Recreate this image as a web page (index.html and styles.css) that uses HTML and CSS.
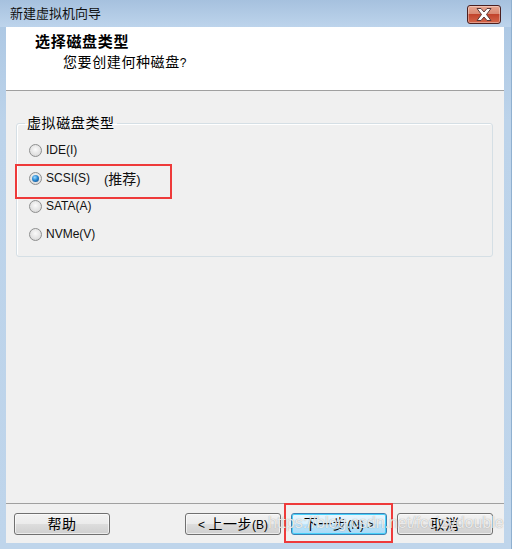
FILE: index.html
```html
<!DOCTYPE html>
<html lang="zh-CN">
<head>
<meta charset="utf-8">
<title>新建虚拟机向导</title>
<link rel="stylesheet" href="styles.css">
</head>
<body>
<div class="window">
  <div class="titlebar">
    <span class="title">新建虚拟机向导</span>
    <button class="close" aria-label="关闭">
      <svg width="22" height="15" viewBox="0 0 22 15">
        <path d="M4 1.5 L8 1.5 L11 5 L14 1.5 L18 1.5 L13.5 7.5 L18 13.5 L14 13.5 L11 10 L8 13.5 L4 13.5 L8.5 7.5 Z" fill="#fff" stroke="#5a3a3a" stroke-width="1" stroke-linejoin="round"/>
      </svg>
    </button>
  </div>
  <div class="client">
    <div class="header">
      <div class="heading">选择磁盘类型</div>
      <div class="subheading">您要创建何种磁盘<span class="q">?</span></div>
    </div>
    <div class="content">
      <fieldset class="group">
        <legend class="legend">虚拟磁盘类型</legend>
        <label class="option"><input type="radio" name="disk" class="radio"><span>IDE(I)</span></label>
        <label class="option"><input type="radio" name="disk" class="radio" checked><span>SCSI(S)</span><span class="rec">(<span class="zh">推荐</span>)</span></label>
        <label class="option"><input type="radio" name="disk" class="radio"><span>SATA(A)</span></label>
        <label class="option"><input type="radio" name="disk" class="radio"><span>NVMe(V)</span></label>
      </fieldset>
    </div>
    <div class="footer">
      <button class="btn"><span class="zh">帮助</span></button>
      <div class="spacer"></div>
      <button class="btn">&lt; <span class="zh">上一步</span>(B)</button>
      <button class="btn btn-default"><span class="zh">下一步</span>(N) &gt;</button>
      <button class="btn"><span class="zh">取消</span></button>
    </div>
  </div>
  <div class="mark mark-radio"></div>
  <div class="mark mark-next"></div>
  <div class="watermark">https://blog.csdn.net/fccizydouble</div>
</div>
</body>
</html>
```
FILE: styles.css
```css
* { box-sizing: border-box; }
html, body { margin: 0; padding: 0; }
body {
  width: 512px;
  height: 549px;
  overflow: hidden;
  font-family: "Liberation Sans", "Noto Sans CJK SC", sans-serif;
  font-size: 12px;
  color: #000;
}
.window {
  position: relative;
  width: 512px;
  height: 549px;
  background: linear-gradient(to bottom, #a9c5e2 0px, #bcd3ea 120px, #bfd5eb 549px);
  display: flex;
  flex-direction: column;
  border-right: 1px solid #8fb0d0;
}
.titlebar {
  height: 27px;
  display: flex;
  align-items: flex-start;
  padding-left: 10px;
  background: linear-gradient(to bottom, #a6c1de, #bdd4ec);
}
.title {
  margin-top: 5px;
  line-height: 18px;
  font-size: 13px;
  color: #111;
  flex: 1;
}
.close {
  margin: 5px 10px 0 0;
  width: 34px;
  height: 19px;
  padding: 0;
  border: 1px solid #4b2020;
  border-radius: 3px;
  background: linear-gradient(to bottom, #e8a690 0%, #d98a74 45%, #c2442c 50%, #d4664a 100%);
  box-shadow: inset 0 0 0 1px rgba(255,255,255,0.35);
  display: flex;
  align-items: center;
  justify-content: center;
}
.client {
  margin: 0 7px 0 6px;
  display: flex;
  flex-direction: column;
}
.header {
  height: 64px;
  background: #fff;
  border-bottom: 1px solid #a0a0a0;
  padding: 6px 0 0 29px;
}
.heading {
  font-weight: bold;
  font-size: 15px;
  letter-spacing: 0.7px;
  line-height: 18px;
}
.subheading {
  margin-top: 2px;
  padding-left: 28px;
  font-size: 14px;
  letter-spacing: 0.6px;
  line-height: 18px;
}
.q { font-size: 12px; }
.zh { font-size: 14px; }
.content {
  height: 412px;
  background: #f0f0f0;
  padding: 23px 11px 0 10px;
}
.group {
  margin: 0;
  padding: 4px 0 8px 12px;
  border: 1px solid #d5dfe5;
  border-radius: 3px;
  box-shadow: inset 1px 1px 0 #fff;
}
.legend {
  margin-left: -4px;
  padding: 0 2px;
  line-height: 18px;
  font-size: 14px;
  letter-spacing: 0.6px;
}
.option {
  display: flex;
  align-items: center;
  height: 28px;
  gap: 4px;
  color: #111;
}
.radio {
  -webkit-appearance: none;
  appearance: none;
  margin: 0;
  width: 13px;
  height: 13px;
  border-radius: 50%;
  border: 1px solid #8e8f8f;
  background: radial-gradient(circle at 50% 40%, #fafafa 0%, #e2e2e2 60%, #cfcfcf 100%);
  position: relative;
}
.radio:checked::after {
  content: "";
  position: absolute;
  left: 2px;
  top: 2px;
  width: 7px;
  height: 7px;
  border-radius: 50%;
  background: radial-gradient(circle at 40% 35%, #9fdcff 0%, #2a8ad4 45%, #0c3e78 100%);
}
.rec {
  margin-left: 10px;
  font-size: 13px;
}
.footer {
  height: 40px;
  border-top: 1px solid #a0a0a0;
  background: #f0f0f0;
  display: flex;
  align-items: flex-start;
  padding: 9px 11px 0 8px;
  gap: 10px;
}
.spacer { flex: 1; }
.btn {
  width: 96px;
  height: 22px;
  padding: 0;
  border: 1px solid #707070;
  border-radius: 3px;
  background: linear-gradient(to bottom, #f2f2f2 0%, #ebebeb 50%, #dddddd 51%, #cfcfcf 100%);
  box-shadow: inset 0 0 0 1px rgba(255,255,255,0.6);
  font-family: "Liberation Sans", "Noto Sans CJK SC", sans-serif;
  font-size: 12px;
  line-height: 18px;
  color: #000;
  white-space: nowrap;
}
.btn .zh { letter-spacing: 0.5px; }
.btn-default {
  border-color: #3c7fb1;
  background: linear-gradient(to bottom, #eaf6fd 0%, #d9f0fc 50%, #bee6fd 51%, #a7d9f5 100%);
  box-shadow: inset 0 0 0 1px #48d1fb;
}
.mark {
  position: absolute;
  border: 2px solid #ee3a3a;
}
.mark-radio {
  left: 15px;
  top: 164px;
  width: 157px;
  height: 35px;
}
.mark-next {
  left: 284px;
  top: 503px;
  width: 109px;
  height: 40px;
}
.watermark {
  position: absolute;
  left: 268px;
  top: 513px;
  font-family: "Liberation Sans", sans-serif;
  font-size: 16px;
  line-height: 20px;
  color: rgba(255,255,255,0.8);
  text-shadow: 0 0 1px rgba(110,110,110,0.7);
  white-space: nowrap;
  pointer-events: none;
}
```
